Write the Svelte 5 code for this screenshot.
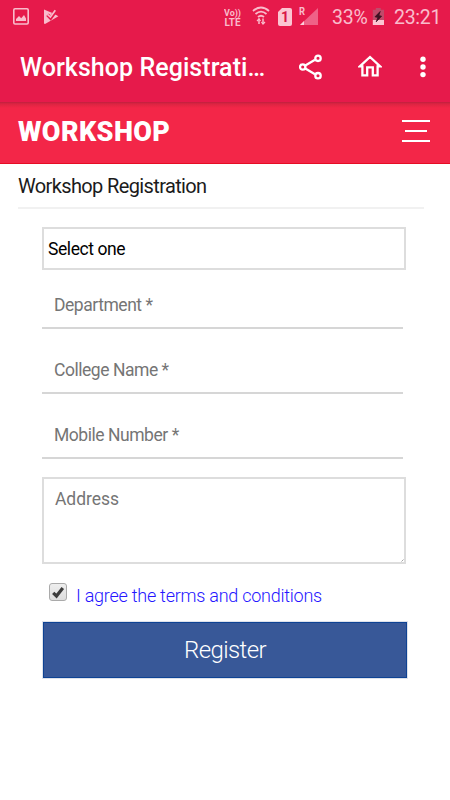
<script>
  const fields = ['Department *', 'College Name *', 'Mobile Number *'];
  let agreed = $state(true);
</script>

<div class="screen">
  <div class="status">
    <svg class="s-image" width="16" height="17" viewBox="0 0 16 17">
      <rect x=".8" y=".8" width="14.4" height="15.2" rx="1.2" fill="none" stroke="#f9bccb" stroke-width="1.6" />
      <path d="M3 13V11l3-3 2.2 2.2L11 7l2 3.5V13z" fill="#f9bccb" />
    </svg>
    <svg class="s-play" width="16" height="17" viewBox="0 0 16 17">
      <path d="M1 1.5 4.5 3 10 5.3 15.4 8.3 9 12 2 16Q1 16 1 15z" fill="#f9bccb" />
      <path d="M4.5 6.8 7.6 10 13 2.6" fill="none" stroke="#e61a4b" stroke-width="3.5" />
      <path d="M4.5 6.3 7.4 9 12.3 2.2" fill="none" stroke="#f9bccb" stroke-width="1.7" />
    </svg>
    <svg class="volte" width="18" height="20" viewBox="0 0 18 20" fill="#f9bccb" font-weight="700">
      <text x="0" y="9" font-size="9.5" textLength="17" lengthAdjust="spacingAndGlyphs">Vo))</text>
      <text x=".6" y="19" font-size="10.5" textLength="16" lengthAdjust="spacingAndGlyphs">LTE</text>
    </svg>
    <svg class="s-wifi" width="18" height="20" viewBox="0 0 18 20">
      <g fill="none" stroke="#f9bccb" stroke-width="1.8">
        <path d="M1 5Q9-2 17 5" />
        <path d="M3.5 8Q9 3.2 14.5 8" />
        <path d="M6 11Q9 8.4 12 11" />
        <path d="M7 18V12.5M11 12.5V18" stroke-width="1.5" />
        <path d="M5 15 7 13 8.6 15M9.4 16 11 18 13 16" stroke-width="1.2" />
      </g>
    </svg>
    <div class="sim">1</div>
    <svg class="s-signal" width="20" height="20" viewBox="0 0 20 20">
      <path d="M19 2V19H1z" fill="#ef6287" />
      <path d="M5 15V19H1z" fill="#fbd0da" />
      <text x="0" y="9" font-size="10" font-weight="700" fill="#f9bccb" textLength="6" lengthAdjust="spacingAndGlyphs">R</text>
    </svg>
    <span class="pct">33%</span>
    <svg class="s-batt" width="13" height="18" viewBox="0 0 13 18">
      <path d="M3.8 0h5v1.8H12V12H.8V1.8h3z" fill="#c04a6a" />
      <path d="M.8 12H12v5H.8z" fill="#fbc5d2" />
      <path d="M8.2 3.5 3 8.8 6 9.4 4.2 13.8 9.6 8.2 6.8 7.6z" fill="#3c1021" stroke="#3c1021" stroke-width=".8" />
    </svg>
    <span class="clock">23:21</span>
  </div>

  <div class="appbar">
    <span class="title">Workshop Registrati…</span>
    <svg class="share" width="24" height="26" viewBox="0 0 24 26" fill="none" stroke="#fff" stroke-width="2.3">
      <path d="M6.3 11.4 16 5.8M6.3 14.6 16 20.2" />
      <circle cx="3.7" cy="13" r="2.7" />
      <circle cx="19" cy="4.3" r="2.7" />
      <circle cx="19" cy="21.7" r="2.7" />
    </svg>
    <svg class="home" width="24" height="22" viewBox="0 0 24 22">
      <path d="M1.8 11.4 12 2 22.2 11.4H19.6V20.3H14.8V12.4H9.2V20.3H4.4V11.4z" fill="none" stroke="#fff" stroke-width="2.3" />
    </svg>
    <svg class="more" width="6" height="22" viewBox="0 0 6 22" fill="#fff">
      <circle cx="3" cy="3.3" r="2.7" /><circle cx="3" cy="11" r="2.7" /><circle cx="3" cy="18.6" r="2.7" />
    </svg>
  </div>

  <header>
    <span class="brand">WORKSHOP</span>
    <div class="burger"><i></i><i></i><i></i></div>
  </header>

  <main>
    <h1><span>Workshop Registration</span></h1>
    <form onsubmit={(e) => e.preventDefault()}>
      <div class="select"><span>Select one</span></div>
      {#each fields as f}
        <div class="field"><span>{f}</span></div>
      {/each}
      <div class="area">
        <span>Address</span>
        <svg width="3" height="3" viewBox="0 0 3 3"><path d="M.5 2.5l2-2" stroke="#999" stroke-width=".9" /></svg>
      </div>
      <div class="agree">
        <button type="button" class="check" aria-label="agree" onclick={() => (agreed = !agreed)}>
          {#if agreed}
            <svg width="14" height="14" viewBox="0 0 14 14"><path d="M2.2 7.8 5.5 11 11.8 3" fill="none" stroke="#3c3c3c" stroke-width="3.2" /></svg>
          {/if}
        </button>
        <span class="terms">I agree the terms and conditions</span>
      </div>
      <button class="register"><span>Register</span></button>
    </form>
  </main>
</div>

<style>
  :global(body) { margin: 0; background: #fff; }
  .screen { width: 450px; height: 800px; overflow: hidden; background: #fff; font-family: Roboto, 'Liberation Sans', sans-serif; }
  span { white-space: nowrap; }
  svg { display: block; flex: none; }
  .status { height: 36px; display: flex; align-items: flex-start; background: #e61a4b; color: #f9bccb; }
  .s-image { margin: 8px 0 0 13px; }
  .s-play { margin: 8px 0 0 14px; }
  .volte { margin: 7px 0 0 165px; }
  .s-wifi { margin: 6px 0 0 10px; }
  .sim { width: 14px; height: 18px; margin: 8px 0 0 8px; border-radius: 2px; background: #fbc5d2; color: #d81847; font-size: 14px; line-height: 18px; font-weight: 700; text-align: center; clip-path: polygon(4px 0, 100% 0, 100% 100%, 0 100%, 0 4px); }
  .s-signal { margin: 6px 0 0 7px; overflow: visible; }
  .pct, .clock { font-size: 19.5px; line-height: 24px; margin-top: 6px; }
  .pct { width: 36px; margin-left: 13px; letter-spacing: -.2px; }
  .s-batt { margin: 8px 0 0 4px; }
  .clock { margin-left: 9px; letter-spacing: -.3px; }
  .appbar { height: 66px; display: flex; align-items: flex-start; background: #e61a4b; color: #fff; }
  .title { width: 246px; margin: 17px 0 0 20px; font-size: 25px; line-height: 30px; font-weight: 500; letter-spacing: .06px; }
  .share { margin: 18px 0 0 33px; }
  .home { margin: 19px 0 0 35px; }
  .more { margin: 20px 0 0 38px; }
  header { height: 62px; box-sizing: border-box; display: flex; justify-content: space-between; align-items: flex-start; padding: 14px 20px 0 18px; border-bottom: 1px solid #e60d24; background: linear-gradient(#c01f3e, #dc2442 2px, #f32648 6px); color: #fff; }
  .brand { font-size: 27px; line-height: 32px; font-weight: 900; letter-spacing: .4px; }
  .burger { width: 28px; height: 22px; margin-top: 4px; display: flex; flex-direction: column; align-items: center; justify-content: space-between; }
  .burger i { width: 28px; height: 2px; background: #fff; }
  .burger i:nth-child(2) { width: 22px; }
  main { padding: 0 26px 0 18px; }
  h1 { margin: 0; padding-top: 9px; height: 34px; border-bottom: 2px solid #f1f1f1; font-size: 20px; line-height: 26px; font-weight: 400; letter-spacing: -.63px; color: #1b1b1b; }
  form { margin: 18px 0 0 24px; width: 366px; }
  .select { width: 364px; height: 43px; box-sizing: border-box; border: 2px solid #ddd; padding: 7px 0 0 4px; font-size: 17.5px; line-height: 26px; letter-spacing: -.42px; color: #000; }
  .field { width: 361px; height: 65px; box-sizing: border-box; border-bottom: 2px solid #d6d6d6; padding: 29px 0 0 12px; font-size: 17.5px; line-height: 24px; letter-spacing: -.46px; color: #757575; }
  .select + .field { height: 59px; padding-top: 23px; }
  .area { width: 364px; height: 87px; margin-top: 18px; box-sizing: border-box; border: 2px solid #ddd; padding: 8px 0 0 11px; display: flex; justify-content: space-between; font-size: 17.5px; line-height: 24px; letter-spacing: -.05px; color: #757575; }
  .area svg { align-self: flex-end; }
  .agree { height: 57px; display: flex; align-items: flex-start; }
  .check { width: 18px; height: 18px; margin: 19px 0 0 7px; padding: 0; border: 1.5px solid #aaa; border-radius: 3px; background: linear-gradient(#eee, #ddd); display: flex; align-items: center; justify-content: center; }
  .terms { margin: 19px 0 0 9px; font-size: 18px; line-height: 26px; font-weight: 300; letter-spacing: -.25px; color: #2516ff; }
  .register { width: 366px; height: 58px; padding: 0; border: 1px solid #dfe2ea; background: #385898; box-shadow: inset 0 0 0 1px #0e4394; color: #fff; font: 300 24px/54px Roboto, 'Liberation Sans', sans-serif; letter-spacing: -.6px; }
</style>
